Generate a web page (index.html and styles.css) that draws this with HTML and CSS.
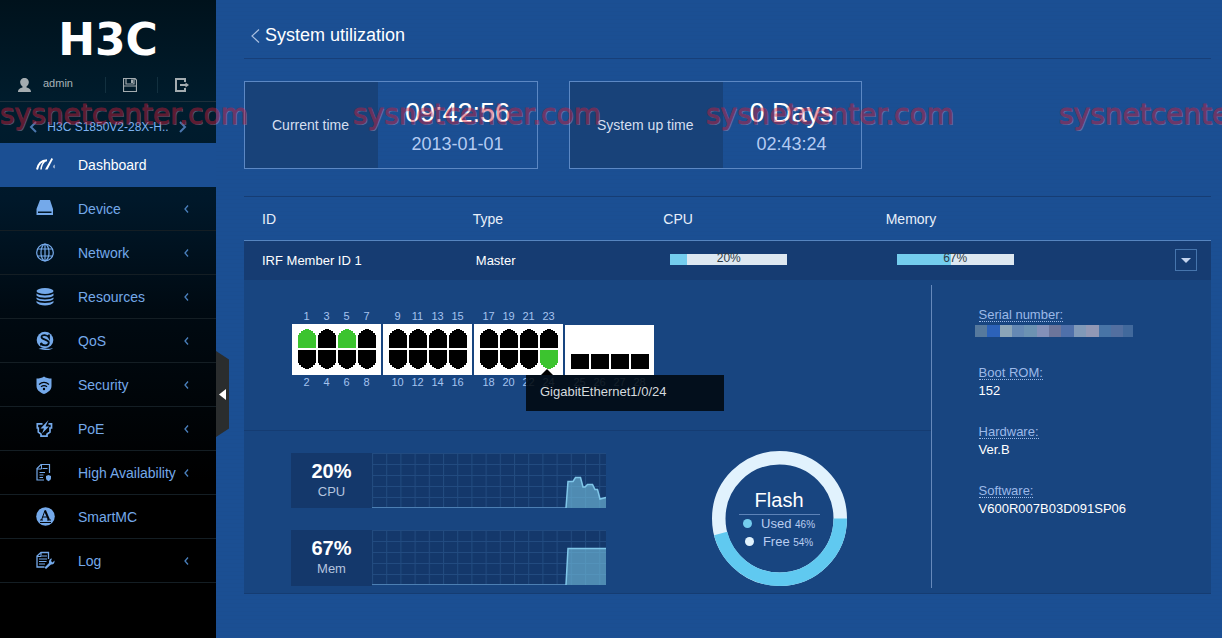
FILE: index.html
```html
<!DOCTYPE html>
<html lang="en">
<head>
<meta charset="utf-8">
<title>System utilization</title>
<link rel="stylesheet" href="styles.css">
</head>
<body>
<svg class="defs" aria-hidden="true">
  <defs>
    <path id="port-up" d="M0 19V6H1V4H3V2H5V1H7V0H11V1H13V2H15V4H17V6H18V19Z"/>
    <path id="port-down" d="M0 0V13H1V15H3V17H5V18H7V19H11V18H13V17H15V15H17V13H18V0Z"/>
    <path id="port-sfp" d="M0 4H18V19H0Z"/>
    <path id="chevron" d="M4 0.500L1 4L4 7.500" fill="none" stroke="currentColor" stroke-width="1.300"/>
    <pattern id="grid" width="14.2" height="11" patternUnits="userSpaceOnUse">
      <path d="M0.500 0V11M0 0.500H14.200" stroke="#224b80" fill="none"/>
    </pattern>
  </defs>
</svg>

<div class="app">
  <aside class="sidebar">
    <header class="brand">
      <div class="logo">H3C</div>
      <div class="user-row">
        <a class="user" href="#">
          <svg width="13" height="14" viewBox="0 0 13 14"><path d="M6.500 0C9 0 11 1.800 10.800 4.500C10.700 6.500 9.500 7.500 8.500 8.500V9.500C11 10.300 13 11 13 14H0C0 11 2 10.300 4.500 9.500V8.500C3.500 7.500 2.300 6.500 2.200 4.500C2 1.800 4 0 6.500 0Z" fill="#a4acb0"/></svg>
          <span>admin</span>
        </a>
        <button class="icon-button" type="button" aria-label="Save">
          <svg width="14" height="14" viewBox="0 0 14 14"><path d="M0.500 0.500H12L13.500 2V13.500H0.500ZM3 0.500V6H11V0.500M1 8H13" fill="none" stroke="#a4acb0" stroke-width="1.200"/><path d="M8 1.500H10V5H8Z" fill="#a4acb0"/></svg>
        </button>
        <button class="icon-button" type="button" aria-label="Log out">
          <svg width="14" height="14" viewBox="0 0 14 14"><path d="M10 4V1H1V13H10V10M5 7H11" fill="none" stroke="#a4acb0" stroke-width="2"/><path d="M10.500 4.500L14 7L10.500 9.500Z" fill="#a4acb0"/></svg>
        </button>
      </div>
      <div class="device-row">
        <button class="icon-button" type="button" aria-label="Previous device"><svg width="8" height="12" viewBox="0 0 8 12"><path d="M7 1L2 6L7 11" fill="none" stroke="#4a76ad" stroke-width="2"/></svg></button>
        <span>H3C S1850V2-28X-H..</span>
        <button class="icon-button" type="button" aria-label="Next device"><svg width="8" height="12" viewBox="0 0 8 12"><path d="M1 1L6 6L1 11" fill="none" stroke="#4a76ad" stroke-width="2"/></svg></button>
      </div>
    </header>
    <nav class="menu">
      <a class="item active" href="#">
        <svg class="icon" viewBox="0 0 19 19"><path d="M1 14.500C2 9 5 5.500 11 5.200" fill="none" stroke="currentColor" stroke-width="2"/><path d="M5 14.500C5.300 11 7 7.500 9.500 5.500" fill="none" stroke="currentColor" stroke-width="1.500"/><path d="M15.500 3L17 4L11.500 14.500H9Z" fill="currentColor"/><path d="M18.500 9.500V13.500C17 12.500 17 11 18.500 9.500Z" fill="currentColor"/></svg>
        <span>Dashboard</span></a>
      <a class="item" href="#">
        <svg class="icon" viewBox="0 0 19 19"><path d="M4 1H14L17 10V16H0.500V10ZM2 12.500V14H15.500V12.500Z" fill="currentColor" fill-rule="evenodd"/></svg>
        <span>Device</span><svg class="more" viewBox="0 0 6 8"><use href="#chevron"/></svg></a>
      <a class="item" href="#">
        <svg class="icon" viewBox="0 0 19 19"><g fill="none" stroke="currentColor" stroke-width="1.200"><circle cx="9" cy="9.500" r="8.300"/><ellipse cx="9" cy="9.500" rx="4" ry="8.300"/><path d="M9 1V18M1.800 6H16.200M1.800 13H16.200"/></g></svg>
        <span>Network</span><svg class="more" viewBox="0 0 6 8"><use href="#chevron"/></svg></a>
      <a class="item" href="#">
        <svg class="icon" viewBox="0 0 19 19"><ellipse cx="9" cy="4" rx="8.500" ry="3" fill="currentColor"/><path d="M0.500 6.500C3 9 15 9 17.500 6.500V8.500C15 11.500 3 11.500 0.500 8.500ZM0.500 10.500C3 13 15 13 17.500 10.500V12C15 15 3 15 0.500 12ZM0.500 14C3 16.500 15 16.500 17.500 14V15.500C15 19.500 3 19.500 0.500 15.500Z" fill="currentColor"/></svg>
        <span>Resources</span><svg class="more" viewBox="0 0 6 8"><use href="#chevron"/></svg></a>
      <a class="item" href="#">
        <svg class="icon" viewBox="0 0 19 19"><circle cx="9" cy="9" r="8.300" fill="currentColor"/><path d="M13 3.500V6.500C11.500 3.800 5.500 3 5.500 6C5.500 9 13.500 8.500 12.800 12C12 15.500 6.500 15 5 12V14.500" fill="none" stroke="#000c15" stroke-width="1.800"/><path d="M2.500 18C7 15 12 19.500 17 17C14 20 9 19 2.500 18Z" fill="currentColor"/></svg>
        <span>QoS</span><svg class="more" viewBox="0 0 6 8"><use href="#chevron"/></svg></a>
      <a class="item" href="#">
        <svg class="icon" viewBox="0 0 19 19"><path d="M8 1.500C10 3 12.500 3.500 15.500 3.500V11C15.500 15 12 17.500 8 19C4 17.500 0.500 15 0.500 11V3.500C3.500 3.500 6 3 8 1.500Z" fill="currentColor"/><g fill="none" stroke="#02070c" stroke-width="1.200"><path d="M3 9.500C6 7 10 7 13 9.500M5 11.800C7 10.200 9 10.200 11 11.800"/></g><circle cx="8" cy="14" r="1.200" fill="#02070c"/></svg>
        <span>Security</span><svg class="more" viewBox="0 0 6 8"><use href="#chevron"/></svg></a>
      <a class="item" href="#">
        <svg class="icon" viewBox="0 0 19 19"><path d="M6.500 4.800H1.300V9H2.300V13L5 15.200V17.200H11V15.200L14 13V9H15.500V4.800H12.500" fill="none" stroke="currentColor" stroke-width="1.700"/><path d="M12.500 1L4.500 9.500H8L6 14.500L13 7.500H9.500Z" fill="currentColor"/></svg>
        <span>PoE</span><svg class="more" viewBox="0 0 6 8"><use href="#chevron"/></svg></a>
      <a class="item" href="#">
        <svg class="icon" viewBox="0 0 19 19"><path d="M13.500 10V1.500H5L1 5.500V17H8" fill="none" stroke="currentColor" stroke-width="1.200"/><path d="M5.500 2V6H1M6.500 5.500H11.500M3.500 9.500H9M3.500 12H7.500M3.500 14.500H7" fill="none" stroke="currentColor"/><path d="M12.500 12L15 13V15C15 16.500 14 17.500 12.500 18.200C11 17.500 10 16.500 10 15V13Z" fill="currentColor"/></svg>
        <span>High Availability</span><svg class="more" viewBox="0 0 6 8"><use href="#chevron"/></svg></a>
      <a class="item" href="#">
        <svg class="icon" viewBox="0 0 19 19"><circle cx="9.500" cy="9.500" r="9.300" fill="currentColor"/><path d="M5.500 13L9 3.500" fill="none" stroke="#02060a"/><path d="M9 3.500L13 13" fill="none" stroke="#02060a" stroke-width="2"/><path d="M6.500 10H12M4 13H7M11 13H15M4 15.500H15" fill="none" stroke="#02060a"/></svg>
        <span>SmartMC</span></a>
      <a class="item" href="#">
        <svg class="icon" viewBox="0 0 19 19"><path d="M12.500 8V1.500H5L1 5V16H8.500" fill="none" stroke="currentColor" stroke-width="1.300"/><path d="M5 2V5.500H1M6 5H11M3 8H11M3 10.500H10.500M3 13H9" fill="none" stroke="currentColor" stroke-width="1.200"/><path d="M8.500 16.500L13 12C12.500 9.500 14 7.500 16 7.500L15 10L16.500 11.500L18.500 9.500C19 12 17 14 15 13.500L10 18Z" fill="currentColor"/></svg>
        <span>Log</span><svg class="more" viewBox="0 0 6 8"><use href="#chevron"/></svg></a>
    </nav>
    <button class="collapse" type="button" aria-label="Collapse menu"><svg width="7" height="11" viewBox="0 0 7 11"><path d="M7 0V11L0 5.500Z" fill="#fff"/></svg></button>
  </aside>

  <main class="main">
    <header class="page-title">
      <a href="#" aria-label="Back"><svg width="9" height="14" viewBox="0 0 9 14"><path d="M8 0.500L1 7L8 13.500" fill="none" stroke="#a9bfe0" stroke-width="1.200"/></svg></a>
      <h1>System utilization</h1>
    </header>

    <section class="times">
      <div class="time-card">
        <div class="time-label">Current time</div>
        <div class="time-value"><strong>09:42:56</strong><span>2013-01-01</span></div>
      </div>
      <div class="time-card">
        <div class="time-label">System up time</div>
        <div class="time-value narrow"><strong>0 Days</strong><span>02:43:24</span></div>
      </div>
    </section>

    <table class="members">
      <thead>
        <tr><th class="col-id">ID</th><th class="col-type">Type</th><th class="col-cpu">CPU</th><th class="col-memory">Memory</th></tr>
      </thead>
      <tbody>
        <tr>
          <td>IRF Member ID 1</td>
          <td class="type">Master</td>
          <td class="cpu"><div class="bar"><div class="fill" style="width:14%"></div><span>20%</span></div></td>
          <td class="memory"><div class="memory-cell"><div class="bar"><div class="fill" style="width:46%"></div><span>67%</span></div>
            <button class="expand" type="button" aria-label="Toggle details"><svg width="10" height="5" viewBox="0 0 10 5"><path d="M0 0H10L5 5Z" fill="#c3d3ee"/></svg></button></div></td>
        </tr>
      </tbody>
    </table>

    <section class="detail">
      <div class="status">
        <div class="ports">
          <div class="group">
            <div class="nums"><span>1</span><span>3</span><span>5</span><span>7</span></div>
            <div class="panel">
              <svg class="on"><use href="#port-up"/></svg><svg><use href="#port-up"/></svg><svg class="on"><use href="#port-up"/></svg><svg><use href="#port-up"/></svg>
              <svg><use href="#port-down"/></svg><svg><use href="#port-down"/></svg><svg><use href="#port-down"/></svg><svg><use href="#port-down"/></svg>
            </div>
            <div class="nums"><span>2</span><span>4</span><span>6</span><span>8</span></div>
          </div>
          <div class="group">
            <div class="nums"><span>9</span><span>11</span><span>13</span><span>15</span></div>
            <div class="panel">
              <svg><use href="#port-up"/></svg><svg><use href="#port-up"/></svg><svg><use href="#port-up"/></svg><svg><use href="#port-up"/></svg>
              <svg><use href="#port-down"/></svg><svg><use href="#port-down"/></svg><svg><use href="#port-down"/></svg><svg><use href="#port-down"/></svg>
            </div>
            <div class="nums"><span>10</span><span>12</span><span>14</span><span>16</span></div>
          </div>
          <div class="group">
            <div class="nums"><span>17</span><span>19</span><span>21</span><span>23</span></div>
            <div class="panel">
              <svg><use href="#port-up"/></svg><svg><use href="#port-up"/></svg><svg><use href="#port-up"/></svg><svg><use href="#port-up"/></svg>
              <svg><use href="#port-down"/></svg><svg><use href="#port-down"/></svg><svg><use href="#port-down"/></svg><svg class="on"><use href="#port-down"/></svg>
            </div>
            <div class="nums"><span>18</span><span>20</span><span>22</span><span>24</span></div>
            <div class="tooltip" role="tooltip">GigabitEthernet1/0/24</div>
          </div>
          <div class="group sfp">
            <div class="panel">
              <svg><use href="#port-sfp"/></svg><svg><use href="#port-sfp"/></svg><svg><use href="#port-sfp"/></svg><svg><use href="#port-sfp"/></svg>
            </div>
            <div class="nums"><span>25</span><span>26</span><span>27</span><span>28</span></div>
          </div>
        </div>
        <div class="usage">
          <div class="charts">
            <div class="chart">
              <div class="reading"><strong>20%</strong><span>CPU</span></div>
              <svg width="234" height="55" viewBox="0 0 234 55"><rect width="234" height="55" fill="#14386b"/><rect width="234" height="55" fill="url(#grid)"/><path d="M0 54.500H194L196 28.500H201L203.500 24.500H208.500L211 34H213L215.500 31.500H220.500L223 36.500H225.500L228 46L234 44.500V55H0Z" fill="#6fb8d8" fill-opacity="0.650"/><path d="M0 54.500H194" stroke="#4c7fb3"/><path d="M194 55L196 28.500H201L203.500 24.500H208.500L211 34H213L215.500 31.500H220.500L223 36.500H225.500L228 46L234 44.500" fill="none" stroke="#80c7e9" stroke-width="1.500"/></svg>
            </div>
            <div class="chart">
              <div class="reading"><strong>67%</strong><span>Mem</span></div>
              <svg width="234" height="55" viewBox="0 0 234 55"><rect width="234" height="55" fill="#14386b"/><rect width="234" height="55" fill="url(#grid)"/><path d="M194 55L196 18.500H234V55Z" fill="#6fb8d8" fill-opacity="0.650"/><path d="M0 54.500H194" stroke="#4c7fb3"/><path d="M194 55L196 18.500H234" fill="none" stroke="#80c7e9" stroke-width="1.500"/></svg>
            </div>
          </div>
          <div class="flash">
            <svg class="ring" viewBox="0 0 135 135"><circle cx="67.500" cy="67.500" r="60.750" fill="none" stroke="#e1f2fd" stroke-width="13.500"/><circle cx="67.500" cy="67.500" r="60.750" fill="none" stroke="#60c9f0" stroke-width="13.500" pathLength="100" stroke-dasharray="46 54"/></svg>
            <div class="flash-text">
              <strong>Flash</strong>
              <div><i class="dot used"></i>Used <small>46%</small></div>
              <div><i class="dot"></i>Free <small>54%</small></div>
            </div>
          </div>
        </div>
      </div>
      <dl class="info">
        <dt><abbr>Serial number:</abbr></dt><dd class="masked" aria-label="Hidden"></dd>
        <dt><abbr>Boot ROM:</abbr></dt><dd>152</dd>
        <dt><abbr>Hardware:</abbr></dt><dd>Ver.B</dd>
        <dt><abbr>Software:</abbr></dt><dd>V600R007B03D091SP06</dd>
      </dl>
    </section>
  </main>
  <div class="watermark" aria-hidden="true"><span>sysnetcenter.com</span><span>sysnetcenter.com</span><span>sysnetcenter.com</span><span>sysnetcenter.com</span></div>
</div>
</body>
</html>
```
FILE: styles.css
```css
* { box-sizing: border-box; }

body {
  margin: 0;
  font-family: "Liberation Sans", Arial, sans-serif;
  font-size: 13px;
  color: #fff;
  background: repeating-linear-gradient(#1b4f93 0 3px, #1b4e91 3px 4px);
}

a { color: inherit; text-decoration: none; }
button { padding: 0; border: 0; background: none; color: inherit; font: inherit; cursor: pointer; }
svg { display: block; flex: none; }
.defs { position: absolute; width: 0; height: 0; }

.app { position: relative; display: flex; min-height: 100vh; overflow: hidden; }

/* Sidebar */
.sidebar {
  position: relative;
  flex: none;
  width: 216px;
  background: linear-gradient(#00121c 0, #001d2e 110px, #00182a 200px, #000a12 310px, #000 480px);
}
.logo {
  height: 68px;
  padding-top: 12px;
  font: bold 44px/56px "DejaVu Sans", sans-serif;
  text-align: center;
}
.user-row {
  display: grid;
  grid-template-columns: 105px 52px 1fr;
  align-items: center;
  height: 34px;
  border-bottom: 1px solid #1d303c;
}
.user { display: flex; gap: 12px; padding-left: 18px; align-items: center; color: #a9b3b8; font-size: 11px; line-height: 12px; }
.user span { padding-bottom: 3px; }
.icon-button { display: flex; align-items: center; height: 16px; }
.user-row .icon-button { padding-left: 17px; border-left: 1px solid #12303f; }
.device-row {
  display: flex;
  align-items: center;
  justify-content: space-between;
  height: 41px;
  padding: 8px 29px 0;
  font-size: 12px;
  color: #7db2f0;
}

.item {
  display: flex;
  align-items: center;
  height: 44px;
  padding: 0 26px 0 36px;
  border-bottom: 1px solid #141e24;
  font-size: 14px;
  color: #74a9ea;
}
.item.active { background: #1b4f93; color: #fff; border-color: #1b4f93; }
.icon { width: 19px; height: 19px; margin-right: 23px; }
.more { width: 6px; height: 8px; margin-left: auto; color: #4a80bd; }

.collapse {
  position: absolute;
  left: 100%;
  top: 351px;
  width: 13px;
  height: 86px;
  padding-left: 3px;
  background: #2a2d2e;
  clip-path: polygon(0 0, 100% 10%, 100% 90%, 0 100%);
}

/* Main area */
.main { flex: 1; min-width: 0; padding: 13px 11px 44px 28px; }

.page-title {
  display: flex;
  align-items: center;
  gap: 5px;
  height: 46px;
  padding-left: 7px;
  border-bottom: 1px solid #173f79;
}
.page-title h1 { margin: 0; font-size: 18px; font-weight: normal; }

.times { display: flex; gap: 31px; margin: 22px 0 27px; }
.time-card { display: flex; height: 88px; border: 1px solid #5c88c4; }
.time-label { display: flex; align-items: center; padding: 0 29px 0 27px; background: #184279; font-size: 14px; color: #d5dff0; }
.time-value {
  display: flex;
  flex-direction: column;
  align-items: center;
  justify-content: center;
  width: 159px;
  padding-top: 8px;
  line-height: 31px;
}
.time-value.narrow { width: 138px; }
.time-value strong { font-size: 27px; font-weight: normal; }
.time-value span { font-size: 18px; color: #b4cbf2; }

.members { width: 100%; table-layout: fixed; border-collapse: collapse; border-top: 1px solid #163d74; }
.members th { height: 44px; padding: 0 18px; text-align: left; font-size: 14px; font-weight: normal; color: #e8effa; border-bottom: 1px solid #5685c0; }
.members td { height: 39px; padding: 0 18px; background: #163c72; }
.col-id { width: 21.8%; }
.col-type { width: 19.7%; }
.col-cpu { width: 23%; }
.members .type { padding-left: 21px; }
.members .cpu { padding-left: 25px; }
.members .memory { padding: 0 14px 0 29px; }
.memory-cell { display: flex; align-items: center; justify-content: space-between; }
.bar { position: relative; width: 117px; height: 11px; background: #dde8f1; color: #2d3944; text-align: center; font-size: 12px; line-height: 9px; }
.members .cpu .bar { margin-bottom: 2px; }
.memory .bar { margin-bottom: 2px; }
.fill { height: 100%; background: #74cdee; }
.bar span { position: absolute; inset: 0; }
.expand { display: grid; place-items: center; width: 22px; height: 22px; border: 1px solid #4675ad; }

.detail {
  display: flex;
  padding: 5px 0;
  background: #184580;
  border-bottom: 1px solid #153c72;
}
.status { width: 71%; padding-bottom: 2px; }

/* Switch ports */
.ports { display: flex; gap: 2px; height: 146px; padding: 24px 0 0 48px; border-bottom: 1px solid #153c72; }
.group { position: relative; width: 89px; }
.group.sfp { padding-top: 16px; }
.nums { display: grid; grid-template-columns: repeat(4, 20px); justify-content: center; height: 15px; font-size: 11px; line-height: 14px; text-align: center; color: #a5c3ef; }
.panel { display: grid; grid-template-columns: repeat(4, 18px); gap: 2px; justify-content: center; align-content: center; height: 51px; background: #fff; }
.sfp .panel { align-content: end; height: 50px; padding-bottom: 6px; }
.panel svg { width: 18px; height: 19px; fill: #000; }
.panel .on { fill: #3cc42f; }
.tooltip {
  position: absolute;
  z-index: 1;
  left: 52px;
  top: 66px;
  width: 198px;
  height: 36px;
  padding-left: 14px;
  line-height: 34px;
  color: #d5dade;
  background: rgba(0, 8, 14, 0.88);
}
.tooltip::before {
  content: "";
  position: absolute;
  left: 15px;
  bottom: 100%;
  border: 6px solid transparent;
  border-top: 0;
  border-bottom-color: #000;
}

/* Usage charts */
.usage { display: flex; justify-content: space-between; padding: 20px 84px 0 47px; }
.charts { display: grid; gap: 22px; padding-top: 2px; }
.chart { display: flex; }
.reading { display: flex; flex-direction: column; align-items: center; justify-content: center; width: 81px; padding-top: 1px; background: #14386b; }
.reading strong { font-size: 20px; line-height: 22px; }
.reading span { line-height: 20px; color: #b4c4df; }
.flash { display: grid; width: 135px; height: 135px; }
.ring { width: 135px; height: 135px; grid-area: 1 / 1; }
.flash-text { grid-area: 1 / 1; justify-self: center; width: 81px; padding-top: 36px; line-height: 17px; text-align: center; color: #b9cdf0; }
.flash-text strong { display: block; height: 28px; border-bottom: 1px solid #5d83b8; font-size: 20px; line-height: 26px; font-weight: normal; color: #fff; }
.flash-text small { font-size: 10px; }
.dot { display: inline-block; width: 9px; height: 9px; margin-right: 9px; border-radius: 50%; background: #e1f2fd; }
.dot.used { background: #74cdee; }

/* Device facts */
.info { flex: 1; margin: 0; padding: 21px 0 0 47px; border-left: 1px solid #6689bb; line-height: 18px; }
.info abbr { color: #9cb9e8; border-bottom: 1px dotted #9cb9e8; line-height: 13px; display: inline-block; }
.info dd { height: 18px; margin: 0 0 23px; }
.info dt { height: 18px; }
.info .masked {
  width: 158px;
  height: 12px;
  margin: 1px 0 27px -4px;
  background: linear-gradient(90deg, #56799d 0 12px, #2c62b9 12px 25px, #8ba5b8 25px 37px, #6589b4 37px 49px, #6c92b2 49px 62px, #8390b8 62px 74px, #6c759b 74px 86px, #4f70aa 86px 99px, #8099b8 99px 111px, #9198b5 111px 124px, #4874a6 124px 136px, #526fa0 136px 148px, #41699c 148px);
}

.watermark {
  position: absolute;
  top: 96px;
  left: 0;
  display: flex;
  z-index: 2;
  pointer-events: none;
  font: 28px/38px "DejaVu Sans", sans-serif;
  -webkit-text-stroke: 1px #cf1c38;
  color: #cf1c38;
  text-shadow: 1px 1px 0 #8fa9cc;
  opacity: 0.45;
}
.watermark span { width: 353px; flex: none; }
```
